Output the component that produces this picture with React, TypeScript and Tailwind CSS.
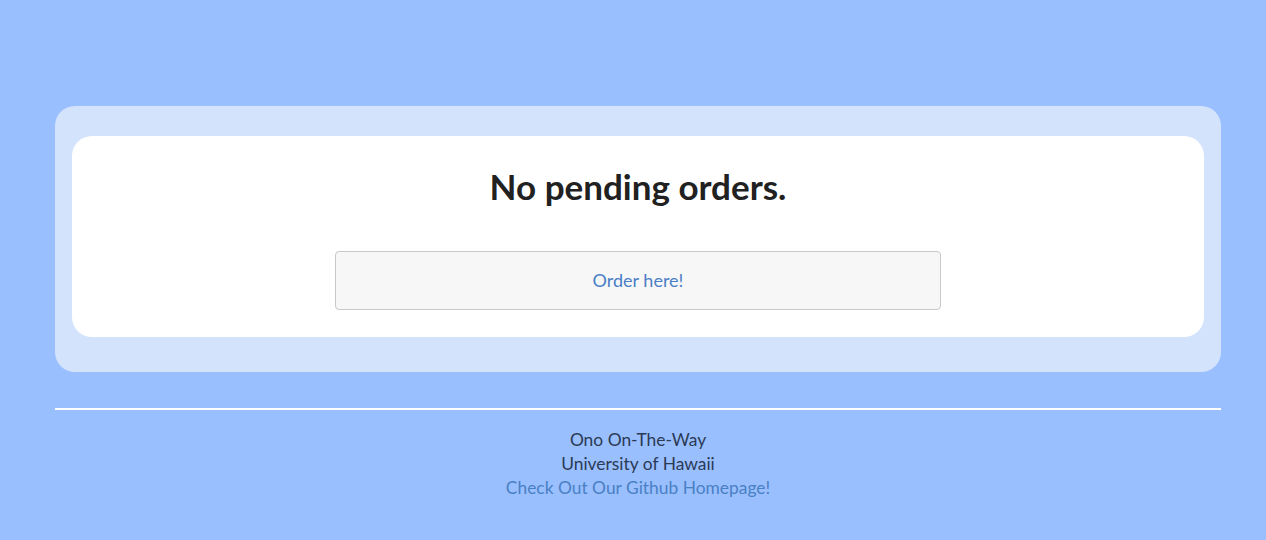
export default function App() {
  return (
    <div className="min-h-[540px] w-full bg-[#99bfff] font-['Lato',sans-serif]">
      <main className="pl-[55px] pr-[45px] pt-[106px]">
        <section className="rounded-[20px] bg-[#d4e3fc] px-[17px] pt-[30px] pb-[35px]">
          <div className="flex flex-col items-center rounded-[20px] bg-white pt-[28px] pb-[27px]">
            <h2 className="text-[35px] leading-[44px] font-bold text-[#212121]">No pending orders.</h2>
            <button className="mt-[43px] h-[59px] w-[606px] rounded-[4px] border border-[#c9c9c9] bg-[#f7f7f7] text-[18px] text-[#4a7fc6]">
              Order here!
            </button>
          </div>
        </section>
        <hr className="mt-[36px] border-t-2 border-white" />
        <footer className="flex flex-col items-center pt-[18px] text-[17.4px] leading-[24px] text-[#2b3a55]">
          <span>Ono On-The-Way</span>
          <span>University of Hawaii</span>
          <a href="#" className="text-[#4a80c4]">Check Out Our Github Homepage!</a>
        </footer>
      </main>
    </div>
  );
}
